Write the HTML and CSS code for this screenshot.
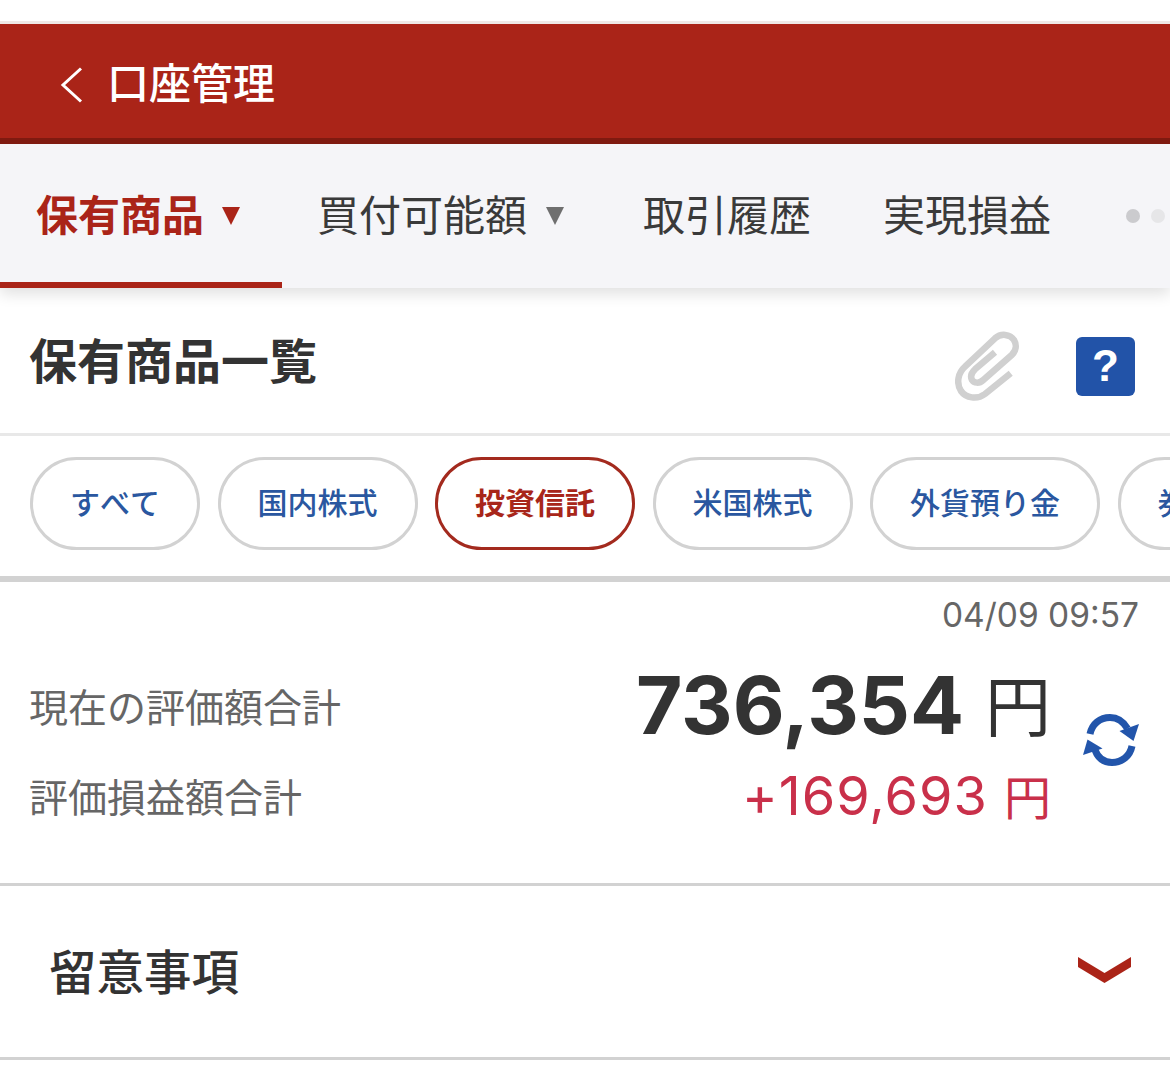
FILE: index.html
```html
<!DOCTYPE html>
<html lang="ja">
<head>
  <meta charset="UTF-8">
  <meta name="viewport" content="width=device-width, initial-scale=1.0">
  <title>口座管理</title>
  <link rel="stylesheet" href="styles.css">
</head>
<body>
  <header class="app-header">
    <svg class="back-icon" width="24" height="36" viewBox="0 0 24 36"><path d="M21 1.5 3 18l18 16.500" fill="none" stroke="#fff" stroke-width="3"/></svg>
    <h1>口座管理</h1>
  </header>

  <nav class="tabs">
    <a class="tab tab-arrow active">保有商品<span class="caret"></span></a>
    <a class="tab tab-arrow">買付可能額<span class="caret"></span></a>
    <a class="tab">取引履歴</a>
    <a class="tab">実現損益</a>
    <span class="dot"></span>
    <span class="dot dot-light"></span>
  </nav>

  <section class="title-row">
    <h2>保有商品一覧</h2>
    <svg class="clip-icon" width="64" height="70" viewBox="0 0 64 70"><path d="M55.700 42.300 30 63C22 69 11 67 6 60 1 52 3 42 10 35.700L40 7.300C46 2 55 3 59 9 62 14 61 20 56.700 24L28.300 49C24 53 19 52 17 49 15 45 16 42 20 38.300L40 21.300" fill="none" stroke="#d0d0d0" stroke-width="6.500"/></svg>
    <a class="help-btn">?</a>
  </section>

  <div class="filters">
    <a class="chip">すべて</a>
    <a class="chip">国内株式</a>
    <a class="chip selected">投資信託</a>
    <a class="chip">米国株式</a>
    <a class="chip">外貨預り金</a>
    <a class="chip">券種別</a>
  </div>

  <section class="summary">
    <div class="updated">04/09 09:57</div>
    <div class="summary-body">
      <div class="summary-rows">
        <div class="summary-row row-total">
          <span class="label">現在の評価額合計</span>
          <span class="total">736,354 <span class="yen">円</span></span>
        </div>
        <div class="summary-row row-profit">
          <span class="label">評価損益額合計</span>
          <span class="profit">+169,693 <span class="yen">円</span></span>
        </div>
      </div>
      <svg class="refresh-icon" width="56" height="52" viewBox="0 0 56 52">
        <path d="M7 20C9 10 17 3.500 27 3.500 34 3.500 40 7 44.500 14.500" fill="none" stroke="#2255ab" stroke-width="7"/>
        <path d="M56 10 50.500 27 36.500 17Z" fill="#2255ab"/>
        <path d="M49 32C47 42 39 48.500 29 48.500 21 48.500 15 44 12 36" fill="none" stroke="#2255ab" stroke-width="7"/>
        <path d="M0 41 4.500 25.500 19.500 34.500Z" fill="#2255ab"/>
      </svg>
    </div>
  </section>

  <section class="notes">
    <h3>留意事項</h3>
    <svg class="chevron-icon" width="53" height="26" viewBox="0 0 53 26"><path d="M0 0 26.500 16 53 0V10L26.500 26 0 10Z" fill="#ab2418"/></svg>
  </section>
</body>
</html>
```

FILE: styles.css
```css
body {
  margin: 0;
  width: 1170px;
  height: 1085px;
  overflow: hidden;
  background-color: #ffffff;
  color: #333;
  font-family: "Liberation Sans", "Noto Sans CJK JP", sans-serif;
}

h1, h2, h3 {
  margin: 0;
  line-height: 1;
}

.app-header {
  margin-top: 21px;
  height: 114px;
  box-sizing: content-box;
  display: flex;
  align-items: center;
  padding-left: 60px;
  background-color: #aa2418;
  border-top: 3px solid #efe8e6;
  border-bottom: 6px solid #7f1a10;
}

.back-icon {
  margin-top: 8px;
}

.app-header h1 {
  margin: 8px 0 0 23px;
  font-size: 42px;
  font-weight: 500;
  color: #fff;
}

.tabs {
  position: relative;
  height: 144px;
  display: flex;
  align-items: center;
  overflow: hidden;
  background-color: #f5f5f8;
  box-shadow: 0 6px 14px rgba(0, 0, 0, 0.12);
  clip-path: inset(0 0 -30px 0);
}

.tab {
  flex: none;
  height: 100%;
  box-sizing: border-box;
  display: flex;
  align-items: center;
  padding: 0 36px 8px;
  font-size: 42px;
  color: #3a3a3a;
}

.tab-arrow {
  padding-right: 42px;
}

.tab-arrow + .tab-arrow {
  padding-left: 35px;
  padding-right: 43px;
}

.tab.active {
  color: #aa2418;
  font-weight: 700;
  border-bottom: 6px solid #aa2418;
  padding-bottom: 2px;
}

.caret {
  margin: 8px 0 0 18px;
  border-left: 9.5px solid transparent;
  border-right: 9.5px solid transparent;
  border-top: 18px solid #6f6f6f;
}

.tab-arrow + .tab-arrow .caret {
  margin-left: 19px;
}

.active .caret {
  border-top-color: #aa2418;
}

.dot {
  flex: none;
  width: 14px;
  height: 14px;
  margin-left: 39px;
  border-radius: 50%;
  background-color: #cbcbce;
}

.dot-light {
  margin-left: 11px;
  background-color: #e6e6e8;
}

.title-row {
  height: 145px;
  box-sizing: content-box;
  display: flex;
  align-items: center;
  padding: 0 35px 0 30px;
  border-bottom: 3px solid #e8e8e8;
}

.title-row h2 {
  flex: 1;
  margin: 4px 0 0 -1px;
  font-size: 48px;
  font-weight: 700;
}

.clip-icon {
  margin: 11px 57px 0 0;
}

.help-btn {
  width: 59px;
  height: 59px;
  margin-top: 12px;
  padding-bottom: 2px;
  box-sizing: border-box;
  display: flex;
  align-items: center;
  justify-content: center;
  border-radius: 6px;
  background-color: #2253a8;
  color: #fff;
  font-size: 44px;
  font-weight: 700;
}

.filters {
  height: 146px;
  box-sizing: border-box;
  display: flex;
  align-items: center;
  gap: 17.5px;
  padding: 0 0 6px 30px;
  overflow: hidden;
  border-bottom: 6px solid #d2d2d2;
}

.chip {
  flex: none;
  height: 93px;
  box-sizing: border-box;
  display: flex;
  align-items: center;
  padding: 0 37px 4px;
  border: 3px solid #d2d2d2;
  border-radius: 47px;
  font-size: 30px;
  font-weight: 500;
  font-kerning: none;
  color: #2a57a0;
}

.chip.selected {
  border-color: #a32a1e;
  color: #a8261a;
  font-weight: 700;
}

.summary {
  height: 304px;
  box-sizing: border-box;
  padding: 15px 31px 0 29px;
  border-bottom: 3px solid #d2d2d2;
}

.updated,
.total,
.profit {
  font-family: Inter, "Noto Sans CJK JP", sans-serif;
}

.updated {
  text-align: right;
  font-size: 33.5px;
  line-height: 36px;
  color: #666;
}

.summary-body {
  display: flex;
  align-items: center;
  gap: 32px;
}

.summary-rows {
  flex: 1;
}

.summary-row {
  display: flex;
  align-items: center;
  justify-content: space-between;
}

.row-total {
  margin-top: 36px;
  height: 72px;
}

.row-profit {
  margin-top: 18px;
  height: 72px;
}

.label {
  font-size: 39px;
  color: #666;
}

.total {
  font-size: 80px;
  font-weight: 700;
  line-height: 1;
}

.total .yen {
  margin-left: 2px;
  font-size: 66px;
  font-weight: 400;
  vertical-align: 3px;
}

.profit {
  margin-top: 2px;
  font-size: 54px;
  letter-spacing: 1px;
  line-height: 1;
  color: #c9304a;
}

.profit .yen {
  font-size: 47px;
  letter-spacing: 0;
}

.refresh-icon {
  margin-top: 16px;
}

.notes {
  height: 174px;
  box-sizing: border-box;
  display: flex;
  align-items: center;
  justify-content: space-between;
  padding: 6px 39px 0 49px;
  border-bottom: 3px solid #d2d2d2;
}

.notes h3 {
  margin-top: -2px;
  font-size: 47.5px;
  font-weight: 500;
}

.chevron-icon {
  margin-top: -10px;
}
```
